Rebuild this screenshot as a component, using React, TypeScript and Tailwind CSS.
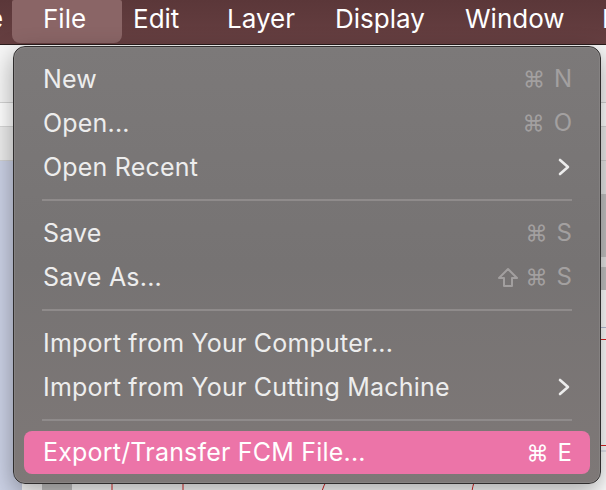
import React from 'react';

type Item =
  | { kind: 'item'; label: string; keys?: string[]; shift?: boolean; sub?: boolean; active?: boolean }
  | { kind: 'sep' };

const items: Item[] = [
  { kind: 'item', label: 'New', keys: ['⌘', 'N'] },
  { kind: 'item', label: 'Open...', keys: ['⌘', 'O'] },
  { kind: 'item', label: 'Open Recent', sub: true },
  { kind: 'sep' },
  { kind: 'item', label: 'Save', keys: ['⌘', 'S'] },
  { kind: 'item', label: 'Save As...', keys: ['⌘', 'S'], shift: true },
  { kind: 'sep' },
  { kind: 'item', label: 'Import from Your Computer...' },
  { kind: 'item', label: 'Import from Your Cutting Machine', sub: true },
  { kind: 'sep' },
  { kind: 'item', label: 'Export/Transfer FCM File...', keys: ['⌘', 'E'], active: true },
];

function Chevron() {
  return (
    <svg width="12" height="18" viewBox="0 0 12 18" fill="none">
      <polyline points="2,2 10,9 2,16" stroke="#ececec" strokeWidth="2.6" strokeLinecap="round" strokeLinejoin="round" />
    </svg>
  );
}

function ShiftIcon() {
  return (
    <svg width="22" height="21" viewBox="0 0 22 21" fill="none">
      <path d="M11 2 L20 11 H15 V19 H7 V11 H2 Z" stroke="#a29f9f" strokeWidth="2" strokeLinejoin="round" />
    </svg>
  );
}

function MenuRow({ item }: { item: Extract<Item, { kind: 'item' }> }) {
  const keyColor = item.active ? 'text-white' : 'text-[#a3a0a0]';
  return (
    <div
      className={`flex items-center justify-between pl-[19px] pr-[18px] rounded-[8px] ${
        item.active ? 'h-[43px] bg-[#ec74a8] text-white' : 'h-[44px] text-[#ededed]'
      }`}
    >
      <span className="text-[25px] tracking-[0.2px] leading-none">{item.label}</span>
      {item.keys && (
        <span className={`flex items-center gap-[9px] text-[24px] leading-none ${keyColor}`}>
          {item.shift && <span className="-mr-[2px]"><ShiftIcon /></span>}
          <span className="text-[22px]">{item.keys[0]}</span>
          <span>{item.keys[1]}</span>
        </span>
      )}
      {item.sub && (
        <span className="pr-[2px]">
          <Chevron />
        </span>
      )}
    </div>
  );
}

export default function App() {
  return (
    <div
      className="relative w-[606px] h-[490px] overflow-hidden bg-[#f4f4f4]"
      style={{ fontFamily: 'Inter, "Open Sans", "DejaVu Sans", sans-serif' }}
    >
      {/* menu bar */}
      <div className="flex items-start h-[45px] bg-gradient-to-b from-[#5b3739] to-[#663f41] border-b border-[#2a1c1c] text-white text-[26px] leading-none whitespace-nowrap">
        <div className="shrink-0 w-[12px] h-[43px] pb-[6px] overflow-hidden flex items-center">
          <span className="-ml-[12px]">e</span>
        </div>
        <div className="shrink-0 w-[110px] h-[43px] pb-[6px] flex items-center pl-[31px] rounded-b-[8px] rounded-t-[2px] bg-[#8a6566]">
          File
        </div>
        <div className="shrink-0 ml-[11px] w-[94px] h-[43px] pb-[6px] flex items-center">Edit</div>
        <div className="shrink-0 w-[108px] h-[43px] pb-[6px] flex items-center">Layer</div>
        <div className="shrink-0 w-[130px] h-[43px] pb-[6px] flex items-center">Display</div>
        <div className="shrink-0 w-[137px] h-[43px] pb-[6px] flex items-center">Window</div>
        <div className="shrink-0 h-[43px] pb-[6px] flex items-center">Help</div>
      </div>

      {/* window behind the menu */}
      <div className="flex flex-col">
        <div className="h-[58px] bg-[#f6f6f6] border-b border-[#d4d4d4]" />
        <div className="h-[24px] bg-white border-b border-[#d8d8d8]" />
        <div className="h-[34px] bg-[#ececec] border-b border-[#d0d0d0]" />
        <div className="flex h-[330px]">
          <div className="w-[22px] bg-[#cbd1e5]" />
          <div className="w-[20px] bg-white" />
          <div className="w-[30px] bg-[#c6c6c6]" />
          <div className="flex-1 bg-white relative">
            <svg className="absolute inset-0" width="534" height="330" viewBox="0 0 534 330">
              <path d="M40 330 C40 300 40 280 40 270" stroke="#d22" strokeWidth="1" fill="none" />
              <path d="M111 330 L111 300" stroke="#d22" strokeWidth="1" fill="none" />
              <path d="M250 330 C255 315 262 310 270 305" stroke="#d22" strokeWidth="1" fill="none" />
              <path d="M400 330 C402 318 406 310 412 305" stroke="#d22" strokeWidth="1" fill="none" />
              <path d="M0 290 L534 290" stroke="#c9cfe0" strokeWidth="1" />
            </svg>
          </div>
          <div className="w-[6px] flex flex-col bg-white">
            <div className="h-[33px] bg-[#e6e6e6]" />
            <div className="h-[63px] bg-[#c2c2c2]" />
            <div className="h-[10px] bg-[#e6e6e6]" />
            <div className="h-[23px] bg-[#c2c2c2]" />
            <div className="h-[37px] bg-white" />
            <div className="h-px bg-[#b8c0d8]" />
            <div className="h-[11px] bg-white" />
            <div className="h-px bg-[#d22]" />
            <div className="h-[105px] bg-white" />
            <div className="h-px bg-[#d22]" />
          </div>
        </div>
      </div>

      {/* File menu */}
      <div className="absolute left-[13px] top-[46px] w-[588px] h-[438px] rounded-[12px] border border-[#2f2d2d] bg-gradient-to-b from-[#7c7979] via-[#767373] to-[#7e7877] shadow-[0_8px_24px_rgba(0,0,0,0.35)]">
        <div className="h-full rounded-[11px] border border-[#8e8a8a]/60 px-[9px] pt-[9px]">
          {items.map((it, i) =>
            it.kind === 'sep' ? (
              <div key={i} className="h-[22px] flex items-center px-[18px]">
                <div className="h-[2px] w-full bg-[#8f8b8b]" />
              </div>
            ) : (
              <MenuRow key={i} item={it} />
            )
          )}
        </div>
      </div>
    </div>
  );
}
